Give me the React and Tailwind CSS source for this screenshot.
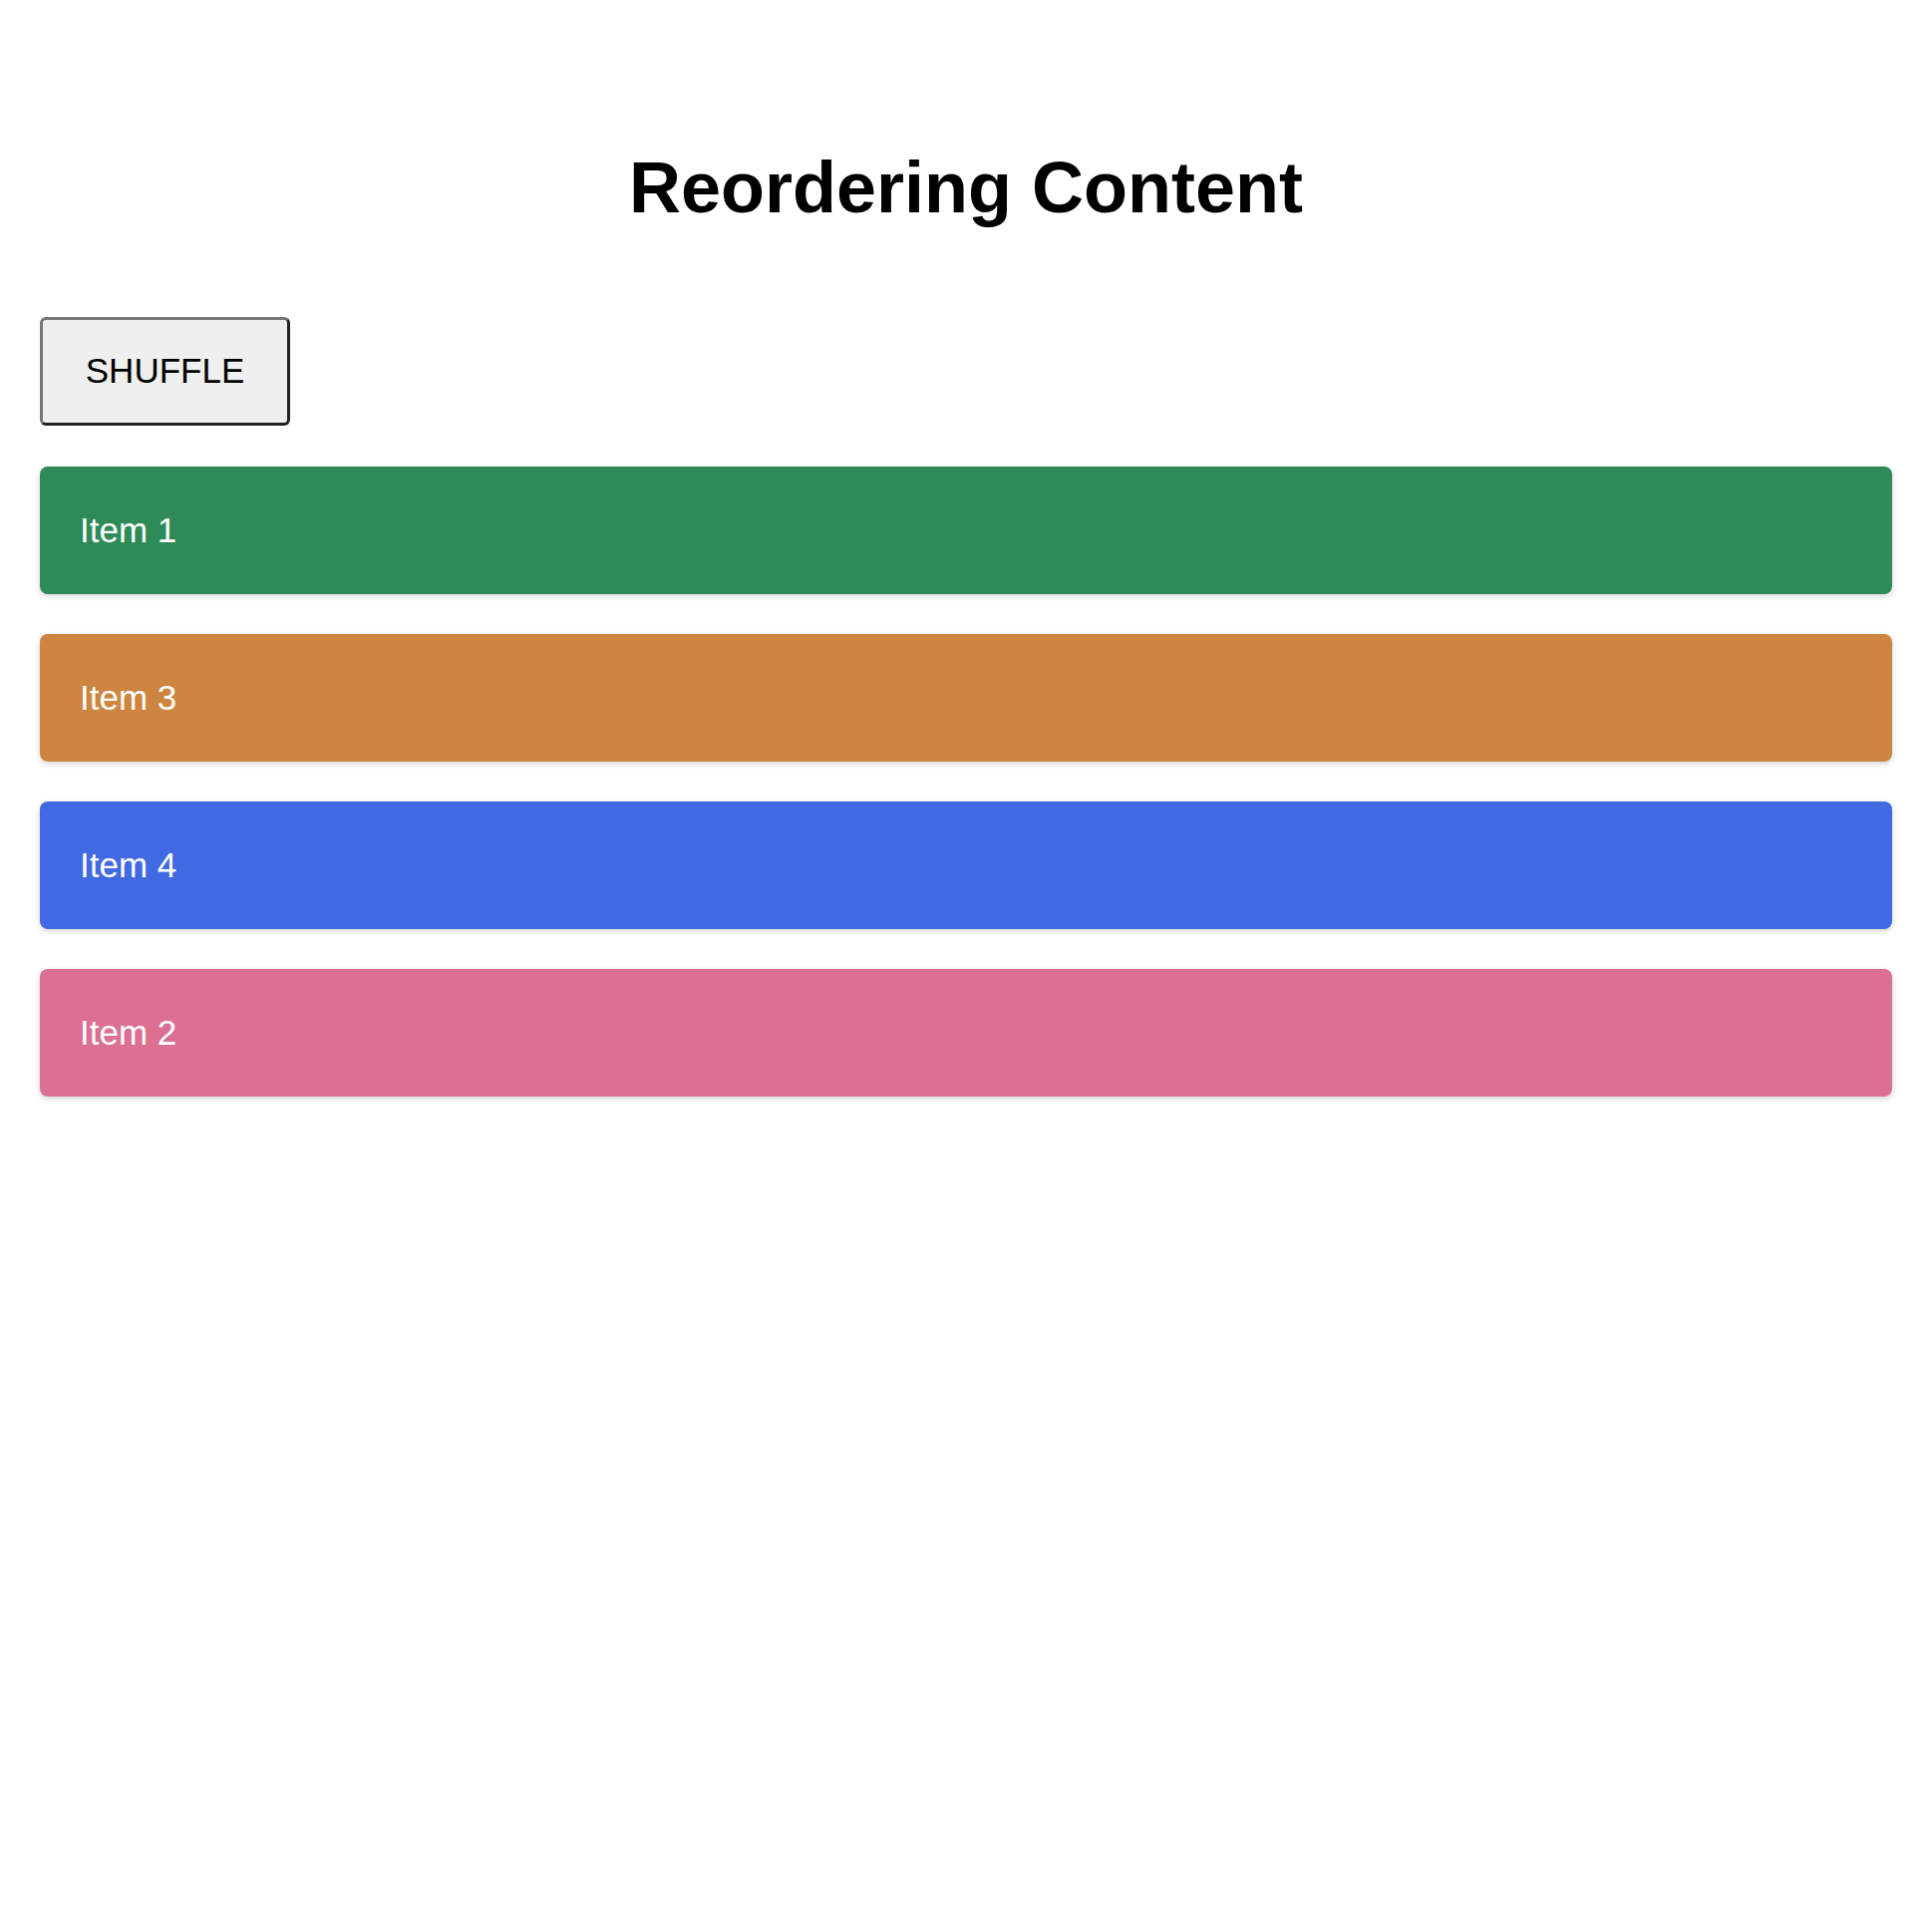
import React, { useState } from 'react';

const initialItems = [
    { id: 1, label: 'Item 1', color: 'bg-[#2e8b57]' },
    { id: 3, label: 'Item 3', color: 'bg-[#cd853f]' },
    { id: 4, label: 'Item 4', color: 'bg-[#4169e1]' },
    { id: 2, label: 'Item 2', color: 'bg-[#db7093]' },
];

const App = () => {
    const [items, setItems] = useState(initialItems);

    const shuffle = () => {
        const next = [...items];
        for (let i = next.length - 1; i > 0; i--) {
            const j = Math.floor(Math.random() * (i + 1));
            [next[i], next[j]] = [next[j], next[i]];
        }
        setItems(next);
    };

    return (
        <div className="min-h-screen bg-white px-10 pt-[152px] font-['Liberation_Sans',Arial,sans-serif]">
            <h1 className="text-center text-[72px] font-bold leading-none text-black">Reordering Content</h1>

            <button
                onClick={shuffle}
                className="mt-[94px] flex h-[109px] w-[251px] items-center justify-center rounded-[6px] border-[3px] border-t-[#767676] border-l-[#767676] border-b-[#222] border-r-[#222] bg-[#efefef] text-[35px] text-black"
            >
                SHUFFLE
            </button>

            <div className="mt-[41px] flex flex-col gap-10">
                {items.map((item) => (
                    <div
                        key={item.id}
                        className={`flex h-[128px] items-center rounded-lg px-10 text-[35px] text-white shadow-[0_2px_6px_rgba(0,0,0,0.18)] ${item.color}`}
                    >
                        {item.label}
                    </div>
                ))}
            </div>
        </div>
    );
};

export default App;
